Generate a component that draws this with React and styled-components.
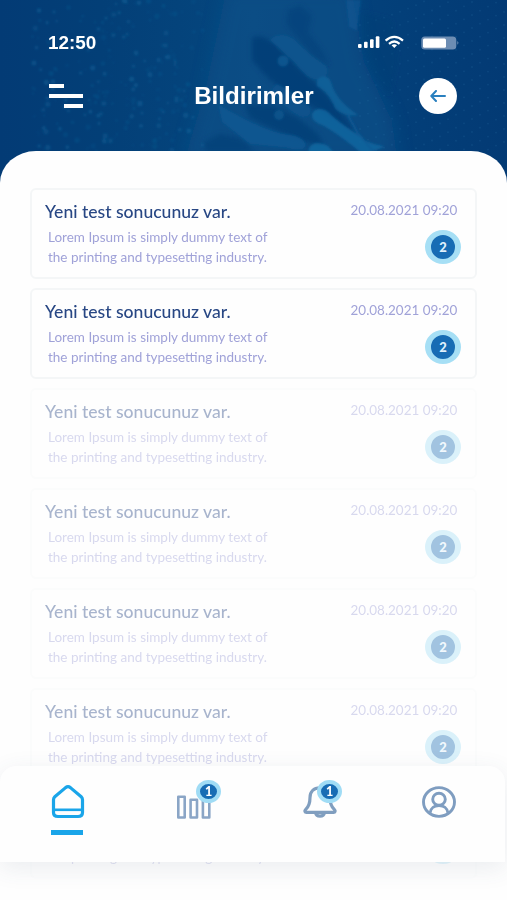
import React from "react";
import styled, { createGlobalStyle } from "styled-components";

const notifications = [
    { id: 1, opacity: 1 },
    { id: 2, opacity: 1 },
    { id: 3, opacity: 0.4 },
    { id: 4, opacity: 0.4 },
    { id: 5, opacity: 0.4 },
    { id: 6, opacity: 0.4 },
    { id: 7, opacity: 0.3 }
];

// fixed pseudo random, so the particles do not move between renders
function rand(n) {
    const x = Math.sin(n * 127.1) * 43758.5453;
    return x - Math.floor(x);
}

function HeaderArt() {

    const particles = [];
    const dots = [];

    for (let i = 0; i < 240; i++) {
        const x = 32 + rand(i + 1) * 172;
        const y = rand(i + 301) * 152;
        particles.push(
            <circle key={i} cx={x} cy={y} r={0.6 + rand(i + 601) * 2.2} opacity={0.08 + rand(i + 901) * 0.26} />
        );
    }

    for (let row = 0; row < 15; row++) {
        for (let col = 0; col < 22; col++) {
            dots.push(
                <circle
                    key={row + "-" + col}
                    cx={360 + col * 8}
                    cy={25 + row * 13 - col * 3.4 + Math.sin(col / 4) * 4}
                    r="0.9"
                />
            );
        }
    }

    return (
        <Art viewBox="0 0 507 190" preserveAspectRatio="none">
            <defs>
                <linearGradient id="base" x1="0" x2="1" y1="0" y2="0">
                    <stop offset="0" stopColor="#033b75" />
                    <stop offset="0.2" stopColor="#033f77" />
                    <stop offset="0.5" stopColor="#05477f" />
                    <stop offset="0.75" stopColor="#03407a" />
                    <stop offset="1" stopColor="#033a74" />
                </linearGradient>
                <filter id="soft" x="-20%" y="-20%" width="140%" height="140%">
                    <feGaussianBlur stdDeviation="8" />
                </filter>
                <filter id="edge" x="-10%" y="-10%" width="120%" height="120%">
                    <feGaussianBlur stdDeviation="1" />
                </filter>
                <filter id="shade" x="-20%" y="-20%" width="140%" height="140%">
                    <feGaussianBlur stdDeviation="2.5" />
                </filter>
            </defs>
            <rect width="507" height="190" fill="url(#base)" />
            <path d="M226 -10H352L364 60L392 120L398 160H184L205 90Z" fill="#074f87" opacity="0.75" filter="url(#soft)" />
            <g fill="#1a76ac" filter="url(#edge)">{particles}</g>
            <g fill="#2f77ac" opacity="0.2">{dots}</g>
            <g fill="#033c75" filter="url(#shade)">
                <path d="M252 38C262 32 274 42 286 56L312 80L330 98L348 122L356 134L330 118L312 106L290 96L266 76L252 60Z" opacity="0.85" />
                <path d="M244 104L272 106L298 118L318 134L324 146L306 142L276 130L250 118Z" opacity="0.75" />
                <path d="M288 10L300 5L312 16L308 32L322 50L330 66L314 56L296 36L286 24Z" opacity="0.45" />
                <path d="M204 142L220 134L240 138L256 152H206Z" opacity="0.6" />
                <path d="M362 12L392 20L398 60L390 96L372 74L362 44Z" opacity="0.4" />
            </g>
            <g filter="url(#edge)">
                <path d="M270 40C276 32 290 34 297 42L312 56L326 66C330 72 326 79 318 80C308 80 301 70 294 62Z" fill="#0a568f" opacity="0.8" />
                <path d="M317 80C322 75 328 75 331 82C334 94 342 104 358 115C350 117 340 114 335 108C331 98 325 90 317 86Z" fill="#11659e" opacity="0.75" />
                <path d="M276 84C286 86 300 98 309 106C313 112 310 118 302 117C292 114 278 100 270 92Z" fill="#0a568f" opacity="0.7" />
                <path d="M312 115C313 108 322 107 328 112C338 122 354 132 366 141C374 145 382 145 384 147L368 153H361C350 143 336 133 324 126C316 123 312 120 312 115Z" fill="#1268a1" opacity="0.8" />
                <path d="M218 104C238 116 264 130 284 134C296 135 304 138 306 145C305 150 298 151 288 148L250 144L222 122Z" fill="#0a5892" opacity="0.8" />
                <path d="M309 149C311 142 320 142 328 146L334 153H308Z" fill="#146ea6" opacity="0.75" />
                <path d="M346 0H361L357 31L349 27Z" fill="#105f9b" opacity="0.45" />
                <circle cx="283" cy="61" r="5.5" fill="#0f639c" opacity="0.6" />
                <circle cx="279" cy="115" r="5" fill="#0f639c" opacity="0.5" />
                <path d="M348 115L357 132L372 150" fill="none" stroke="#0d5b96" strokeWidth="1.8" />
            </g>
        </Art>
    );
}

function StatusIcons() {
    return (
        <svg width="104" height="18" viewBox="0 0 104 18" fill="#fff">
            <rect x="1" y="11" width="3.6" height="4" rx="1" />
            <rect x="7" y="8.7" width="3.6" height="6.3" rx="1" />
            <rect x="13" y="6.2" width="3.6" height="8.8" rx="1" />
            <rect x="18.8" y="3.2" width="3.6" height="11.8" rx="1" />
            <g fill="none" stroke="#fff" strokeWidth="2.2">
                <path d="M28.6 7.7Q37.3 0.2 46 7.7" />
                <path d="M32 10.8Q37.3 6.2 42.6 10.8" />
            </g>
            <path d="M34.6 12.3Q37.3 10.1 40 12.3L37.3 15Z" />
            <rect x="64.3" y="3.6" width="35" height="13" rx="3.5" fill="#6d8db3" />
            <rect x="66" y="5.4" width="23" height="9.4" rx="1.5" />
            <path d="M100.3 8.1Q102.6 9.9 100.3 11.7Z" fill="#6d8db3" />
        </svg>
    );
}

function HomeIcon() {
    return (
        <svg width="34" height="36" viewBox="0 0 34 36" fill="none" stroke="#1aa5e9" strokeWidth="3.2" strokeLinejoin="round">
            <path d="M2.5 15.8Q2.5 14 3.8 12.8L14.6 3.6Q17 1.8 19.4 3.6L30.2 12.8Q31.5 14 31.5 15.8V28.5Q31.5 32.5 27 32.5H7Q2.5 32.5 2.5 28.5Z" />
            <path d="M2.5 25.8H31.5" strokeWidth="2.6" />
        </svg>
    );
}

function StatsIcon() {
    return (
        <svg width="34" height="24" viewBox="0 0 34 24" fill="none" stroke="#8aa5c6" strokeWidth="2.6" strokeLinejoin="round">
            <rect x="1.3" y="1.8" width="6.4" height="20.7" />
            <rect x="13.6" y="4.8" width="6.4" height="17.7" />
            <rect x="25.9" y="1.8" width="6.4" height="20.7" />
        </svg>
    );
}

function BellIcon() {
    return (
        <svg width="36" height="34" viewBox="0 0 36 34" fill="none" stroke="#809ebf" strokeWidth="3.2" strokeLinejoin="round">
            <path d="M18 2.8C11.5 2.8 8 6.8 8 12.5C8 19.5 6.2 22.3 3.6 24.6C2.3 26 2.8 27.3 4.5 27.3H31.5C33.2 27.3 33.7 26 32.4 24.6C29.8 22.3 28 19.5 28 12.5C28 6.8 24.5 2.8 18 2.8Z" />
            <path d="M13.6 27.8C14.2 32.2 21.8 32.2 22.4 27.8" />
        </svg>
    );
}

function UserIcon() {
    return (
        <svg width="34" height="33" viewBox="0 0 34 33" fill="none" stroke="#7f9dc0" strokeWidth="2.9">
            <ellipse cx="17" cy="17" rx="15.5" ry="14.4" />
            <ellipse cx="17" cy="14.2" rx="6.3" ry="6" />
            <path d="M8 28.2C9 18 25 18 26 28.2" />
        </svg>
    );
}

export default function App() {
    return (
        <Screen>
            <GlobalStyle />
            <Header>
                <HeaderArt />
                <StatusBar>
                    <Clock>12:50</Clock>
                    <StatusIcons />
                </StatusBar>
                <TitleBar>
                    <MenuButton aria-label="Menu">
                        <MenuLine $width="15px" />
                        <MenuLine $width="34px" />
                        <MenuLine $width="19px" $right />
                    </MenuButton>
                    <Title>Bildirimler</Title>
                    <BackButton aria-label="Geri">
                        <svg width="16" height="12" viewBox="0 0 16 12" fill="none" stroke="#2a80bf" strokeWidth="2" strokeLinecap="round" strokeLinejoin="round">
                            <path d="M15 6H1.5M6 1L1.3 6L6 11" />
                        </svg>
                    </BackButton>
                </TitleBar>
            </Header>
            <Sheet>
                {notifications.map(item => (
                    <Card key={item.id} $opacity={item.opacity}>
                        <div>
                            <CardTitle>Yeni test sonucunuz var.</CardTitle>
                            <CardText>
                                Lorem Ipsum is simply dummy text of<br />
                                the printing and typesetting industry.
                            </CardText>
                        </div>
                        <CardSide>
                            <CardDate>20.08.2021 09:20</CardDate>
                            <Count>2</Count>
                        </CardSide>
                    </Card>
                ))}
            </Sheet>
            <BottomNav>
                <NavItem $left="51px" $top="18px">
                    <HomeIcon />
                    <ActiveLine />
                </NavItem>
                <NavItem $left="177px" $top="29px">
                    <StatsIcon />
                    <Badge $top="-15px" $left="19px">1</Badge>
                </NavItem>
                <NavItem $left="302px" $top="19px">
                    <BellIcon />
                    <Badge $top="-5px" $left="15px">1</Badge>
                </NavItem>
                <NavItem $left="422px" $top="19px">
                    <UserIcon />
                </NavItem>
            </BottomNav>
        </Screen>
    );
}

const GlobalStyle = createGlobalStyle`
    * {
        box-sizing: border-box;
        margin: 0;
        padding: 0;
    }

    body {
        background-color: #FFFFFF;
        font-family: Lato, sans-serif;
    }

    button {
        border: none;
        background: none;
    }

    svg {
        display: block;
    }
`;

const Screen = styled.div`
    position: relative;
    width: 507px;
    height: 900px;
    overflow: hidden;
`;

const Header = styled.header`
    position: relative;
    height: 151px;
    padding: 31px 46px 0 48px;
    color: #FFFFFF;
    font-family: "Liberation Sans", sans-serif;
`;

const Art = styled.svg`
    position: absolute;
    top: 0;
    left: 0;
    width: 507px;
    height: 190px;
    z-index: -1;
`;

const StatusBar = styled.div`
    height: 22px;
    display: flex;
    align-items: center;
    justify-content: space-between;
`;

const Clock = styled.p`
    padding-top: 2px;
    font-size: 17.5px;
    font-weight: 700;
    line-height: 22px;
    transform: scaleX(1.08);
    transform-origin: left;
`;

const TitleBar = styled.div`
    height: 36px;
    margin-top: 25px;
    padding-right: 4px;
    display: flex;
    align-items: center;
    justify-content: space-between;
`;

const MenuButton = styled.button`
    width: 34px;
    display: flex;
    flex-direction: column;
    gap: 6px;
    margin-left: 1px;
`;

const MenuLine = styled.span`
    width: ${props => props.$width};
    height: 4px;
    background-color: #FFFFFF;
    align-self: ${props => props.$right ? "flex-end" : "flex-start"};
`;

const Title = styled.h1`
    margin-left: 6px;
    font-size: 23px;
    font-weight: 700;
    line-height: 36px;
    transform: scaleX(1.05);
`;

const BackButton = styled.button`
    width: 38px;
    height: 36px;
    border-radius: 50%;
    background-color: #FFFFFF;
    display: flex;
    align-items: center;
    justify-content: center;
`;

const Sheet = styled.main`
    position: relative;
    height: 749px;
    padding: 37px 30px 0 30px;
    border-radius: 36px 36px 0 0 / 32px 32px 0 0;
    background-color: #FEFEFE;
    overflow: hidden;
    display: flex;
    flex-direction: column;
    gap: 9px;
`;

const Card = styled.article`
    flex: none;
    height: 91px;
    padding: 12px 14px 0 13px;
    border: 2px solid ${props => props.$opacity === 1 ? "#F4F6F7" : "#F8FAFA"};
    border-radius: 6px;
    opacity: ${props => props.$opacity};
    display: flex;
    justify-content: space-between;
`;

const CardTitle = styled.h2`
    width: max-content;
    color: #284784;
    font-size: 16.5px;
    font-weight: 500;
    line-height: 20px;
    transform: scaleX(1.064);
    transform-origin: left;
`;

const CardText = styled.p`
    width: max-content;
    margin: 6px 0 0 3px;
    color: #A0A2D8;
    font-size: 12.5px;
    line-height: 20px;
    transform: scaleX(1.08);
    transform-origin: left;
`;

const CardSide = styled.div`
    display: flex;
    flex-direction: column;
    align-items: flex-end;
`;

const CardDate = styled.p`
    margin-right: 4px;
    color: #A0A2D8;
    font-size: 12.5px;
    line-height: 18px;
    transform: scaleX(1.075);
    transform-origin: right;
`;

const Count = styled.span`
    width: 36px;
    height: 34px;
    margin-top: 10px;
    border: solid #A6DFF5;
    border-width: 5.5px 6px;
    border-radius: 50%;
    background-color: #176CB4;
    color: #DFF1FC;
    font-size: 13px;
    font-weight: 900;
    line-height: 24px;
    text-align: center;
`;

const BottomNav = styled.nav`
    position: absolute;
    left: 0;
    bottom: 38px;
    width: 505px;
    height: 96px;
    border-radius: 16px 16px 0 0;
    background-color: #FEFEFE;
    box-shadow: 0 6px 24px rgba(60, 80, 110, 0.1);
    display: grid;
`;

const NavItem = styled.button`
    grid-area: 1 / 1;
    position: relative;
    justify-self: start;
    align-self: start;
    margin-left: ${props => props.$left};
    margin-top: ${props => props.$top};
`;

const ActiveLine = styled.span`
    display: block;
    width: 32px;
    height: 5px;
    margin-top: 10px;
    background-color: #1AA5E9;
`;

const Badge = styled.span`
    position: absolute;
    top: ${props => props.$top};
    left: ${props => props.$left};
    width: 25px;
    height: 23px;
    border: 4px solid #A0DCF5;
    border-radius: 50%;
    background-color: #176CB4;
    color: #FFFFFF;
    font-family: Lato, sans-serif;
    font-size: 12.5px;
    font-weight: 900;
    line-height: 15px;
    text-align: center;
`;
